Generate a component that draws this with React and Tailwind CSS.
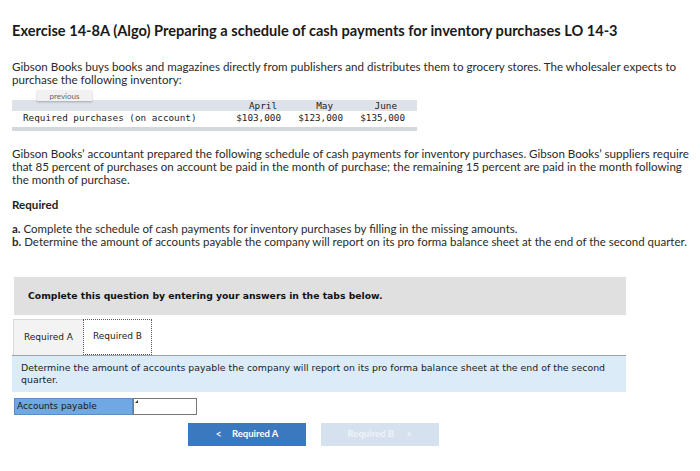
import React from "react";

export default function App() {
  return (
    <div className="w-[700px] h-[471px] bg-white overflow-hidden text-[#222]">
      <div className="pl-[12px] pr-[4px]">
        <h1 className="pt-[22px] text-[14.6px] leading-[18px] font-bold text-[#1a1a1a] font-['Lato',sans-serif]">
          Exercise 14-8A (Algo) Preparing a schedule of cash payments for inventory purchases LO 14-3
        </h1>
        <p className="mt-[20px] pr-[6px] text-[11.6px] leading-[13px] font-['Lato',sans-serif] text-[#2a2a2a]">
          Gibson Books buys books and magazines directly from publishers and distributes them to grocery stores. The wholesaler expects to purchase the following inventory:
        </p>

        <div className="mt-[4px] w-[405px] relative">
          <div className="ml-[25px] w-[55px] h-[11px] bg-[#f1f1f1] shadow-[0_1px_2px_rgba(0,0,0,0.25)] flex items-center justify-center text-[8px] text-[#666] font-['Lato',sans-serif] relative z-10">
            previous
          </div>
          <div className="-mt-[1px] font-['DejaVu_Sans_Mono',monospace] text-[9.3px] leading-[11px] text-[#222]">
            <div className="grid grid-cols-[209px_60px_62px_62px] bg-[#dde1e8] h-[11px] items-center">
              <div></div>
              <div className="text-right pr-[4px]">April</div>
              <div className="text-right pr-[10px]">May</div>
              <div className="text-right pr-[8px]">June</div>
            </div>
            <div className="grid grid-cols-[209px_60px_62px_62px] h-[13px] items-center">
              <div className="pl-[11px]">Required purchases (on account)</div>
              <div className="text-right">$103,000</div>
              <div className="text-right">$123,000</div>
              <div className="text-right">$135,000</div>
            </div>
            <div className="mt-[3px] h-[4px] bg-[#d4d7dc]"></div>
          </div>
        </div>

        <p className="mt-[16px] pr-[4px] text-[11.6px] leading-[13px] font-['Lato',sans-serif] text-[#2a2a2a]">
          Gibson Books’ accountant prepared the following schedule of cash payments for inventory purchases. Gibson Books’ suppliers require that 85 percent of purchases on account be paid in the month of purchase; the remaining 15 percent are paid in the month following the month of purchase.
        </p>
        <p className="mt-[12px] text-[11.6px] leading-[13px] font-bold font-['Lato',sans-serif] text-[#222]">Required</p>
        <div className="mt-[11px] text-[11.5px] leading-[13px] font-['Lato',sans-serif] text-[#2a2a2a]">
          <p className="whitespace-nowrap"><span className="font-bold">a.</span> Complete the schedule of cash payments for inventory purchases by filling in the missing amounts.</p>
          <p className="whitespace-nowrap"><span className="font-bold">b.</span> Determine the amount of accounts payable the company will report on its pro forma balance sheet at the end of the second quarter.</p>
        </div>
      </div>

      <div className="ml-[14px] w-[612px] mt-[29px] h-[38px] bg-[#e0e0e0] flex items-center pl-[14px] font-['DejaVu_Sans',sans-serif] font-bold text-[9.25px] text-[#111]">
        Complete this question by entering your answers in the tabs below.
      </div>

      <div className="ml-[12px] w-[614px] mt-[4px]">
        <div className="flex h-[37px] items-end border-b border-[#9aa3ad]">
          <div className="ml-[1px] w-[70px] h-[36px] bg-[#f3f3f3] border-l border-t border-[#d8d8d8] flex items-center justify-center font-['DejaVu_Sans',sans-serif] text-[9px] text-[#222]">
            Required A
          </div>
          <div className="w-[69px] h-[36px] bg-white border border-dotted border-[#555] flex items-center justify-center font-['DejaVu_Sans',sans-serif] text-[9px] text-[#222]">
            Required B
          </div>
        </div>
        <div className="bg-[#dcebf8] h-[36px] pl-[9px] pr-[10px] pt-[6px] font-['DejaVu_Sans',sans-serif] text-[9.4px] leading-[12px] text-[#222]">
          Determine the amount of accounts payable the company will report on its pro forma balance sheet at the end of the second quarter.
        </div>
        <div className="mt-[6px] ml-[2px] flex h-[17px]">
          <div className="w-[119px] h-full bg-[#6fa8e2] border border-[#5a8ec6] flex items-center pl-[2px] font-['DejaVu_Sans',sans-serif] text-[9px] text-[#1a1a1a]">
            Accounts payable
          </div>
          <div className="relative w-[64px] h-full bg-white border border-[#777]">
            <div className="absolute left-[1px] top-[1px] w-0 h-0 border-l-[3px] border-l-transparent border-t-[3px] border-t-[#333] rotate-90"></div>
          </div>
        </div>
        <div className="mt-[8px] flex gap-[15px] pl-[176px]">
          <div className="w-[118px] h-[23px] bg-[#3a78c0] flex items-center justify-center gap-[10px] font-['Lato',sans-serif] font-bold text-[9.5px] text-white">
            <span className="text-[11px] font-normal">&lt;</span>
            <span>Required A</span>
          </div>
          <div className="w-[118px] h-[23px] bg-[#d6e1f0] flex items-center justify-center gap-[12px] font-['Lato',sans-serif] font-bold text-[9.5px] text-[#eef3fa]">
            <span>Required B</span>
            <span className="text-[11px] font-normal">&gt;</span>
          </div>
        </div>
      </div>
    </div>
  );
}
